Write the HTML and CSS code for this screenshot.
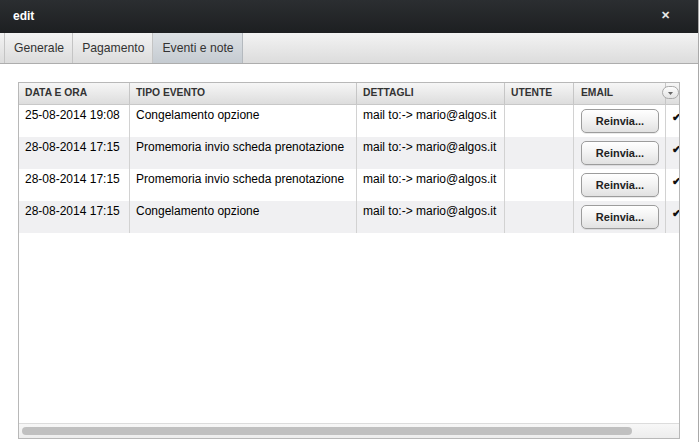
FILE: index.html
```html
<!DOCTYPE html>
<html>
<head>
<meta charset="utf-8">
<link rel="stylesheet" href="styles.css">
</head>
<body>
<div class="window">
  <div class="titlebar">
    <span class="title">edit</span>
    <span class="close">&#x2715;</span>
  </div>
  <div class="tabbar">
    <div class="tab">Generale</div>
    <div class="tab">Pagamento</div>
    <div class="tab active">Eventi e note</div>
  </div>
  <div class="body">
    <div class="grid">
      <div class="viewport">
        <div class="row head">
          <div class="c c1">DATA E ORA</div>
          <div class="c c2">TIPO EVENTO</div>
          <div class="c c3">DETTAGLI</div>
          <div class="c c4">UTENTE</div>
          <div class="c c5">EMAIL</div>
          <div class="c c6"><span class="menu"><svg width="9" height="6" viewBox="0 0 9 6"><path d="M2 2h5l-2.5 3z" fill="#666"/></svg></span></div>
        </div>
        <div class="row">
          <div class="c c1">25-08-2014 19:08</div>
          <div class="c c2">Congelamento opzione</div>
          <div class="c c3">mail to:-&gt; mario@algos.it</div>
          <div class="c c4"></div>
          <div class="c c5"><button class="btn">Reinvia...</button></div>
          <div class="c c6"><span class="chk">&#x2714;</span></div>
        </div>
        <div class="row alt">
          <div class="c c1">28-08-2014 17:15</div>
          <div class="c c2">Promemoria invio scheda prenotazione</div>
          <div class="c c3">mail to:-&gt; mario@algos.it</div>
          <div class="c c4"></div>
          <div class="c c5"><button class="btn">Reinvia...</button></div>
          <div class="c c6"><span class="chk">&#x2714;</span></div>
        </div>
        <div class="row">
          <div class="c c1">28-08-2014 17:15</div>
          <div class="c c2">Promemoria invio scheda prenotazione</div>
          <div class="c c3">mail to:-&gt; mario@algos.it</div>
          <div class="c c4"></div>
          <div class="c c5"><button class="btn">Reinvia...</button></div>
          <div class="c c6"><span class="chk">&#x2714;</span></div>
        </div>
        <div class="row alt">
          <div class="c c1">28-08-2014 17:15</div>
          <div class="c c2">Congelamento opzione</div>
          <div class="c c3">mail to:-&gt; mario@algos.it</div>
          <div class="c c4"></div>
          <div class="c c5"><button class="btn">Reinvia...</button></div>
          <div class="c c6"><span class="chk">&#x2714;</span></div>
        </div>
      </div>
      <div class="hscroll"><div class="thumb"></div></div>
    </div>
  </div>
</div>
</body>
</html>
```
FILE: styles.css
```css
html, body {
  margin: 0;
  padding: 0;
  width: 700px;
  height: 442px;
  overflow: hidden;
  background: #fff;
  font-family: "Liberation Sans", Arial, sans-serif;
}
.window {
  width: 698px;
  height: 442px;
  border-right: 1px solid #a9a9a9;
  display: flex;
  flex-direction: column;
}
.titlebar {
  height: 33px;
  flex: none;
  background: linear-gradient(#2b2e31, #1d1f21);
  display: flex;
  align-items: center;
  justify-content: space-between;
  padding: 0 28px 0 13px;
  color: #fff;
}
.title {
  font-weight: bold;
  font-size: 12px;
  margin-top: -2px;
}
.close {
  font-size: 11px;
  font-weight: bold;
  color: #e8e8e8;
  margin-top: -2px;
}
.tabbar {
  height: 30px;
  flex: none;
  background: linear-gradient(#f3f3f3, #dcdcdc);
  border-bottom: 1px solid #adadad;
  display: flex;
  padding-left: 4px;
}
.tab {
  font-size: 12.2px;
  color: #333;
  padding: 0 8px 0 9px;
  line-height: 30px;
  border-left: 1px solid #c4c4c4;
}
.tab.active {
  background: linear-gradient(#dde1e5, #c5cbd1);
  border-right: 1px solid #b4b9be;
}
.body {
  flex: 1;
  padding: 18px 0 3px 18px;
  display: flex;
}
.grid {
  width: 660px;
  border: 1px solid #b8b8b8;
  display: flex;
  flex-direction: column;
  overflow: hidden;
}
.viewport {
  flex: 1;
  overflow: hidden;
}
.row {
  display: flex;
  height: 32px;
  width: 720px;
  font-size: 12px;
  color: #000;
}
.row.alt {
  background: #f0f0f2;
}
.row.head {
  height: 21px;
  background: linear-gradient(#f6f6f6, #dddddd);
  border-bottom: 1px solid #c8c8c8;
  font-size: 10.3px;
  font-weight: bold;
  color: #333;
}
.c {
  flex: none;
  border-right: 1px solid #d2d2d2;
  padding: 3px 6px 0 6px;
  box-sizing: border-box;
  white-space: nowrap;
  overflow: hidden;
}
.head .c {
  padding-top: 4px;
  border-right-color: #c6c6c6;
}
.c1 { width: 111px; }
.c2 { width: 227px; }
.c3 { width: 148px; }
.c4 { width: 69px; }
.c5 { width: 92px; padding: 4px 0 0 7px; }
.head .c5 { padding: 4px 6px 0 7px; }
.c6 { width: 73px; border-right: none; padding: 5px 0 0 6px; }
.head .c6 { position: relative; overflow: visible; }
.menu {
  position: absolute;
  left: -4px;
  top: 3px;
  width: 15px;
  height: 11px;
  border: 1px solid #a9a9a9;
  border-radius: 7px;
  background: linear-gradient(#fdfdfd, #e3e3e3);
  display: flex;
  align-items: center;
  justify-content: center;
}
.btn {
  width: 78px;
  height: 24px;
  border: 1px solid #9c9c9c;
  border-radius: 5px;
  background: linear-gradient(#ffffff, #f2f2f2 50%, #e1e1e1);
  font-family: "Liberation Sans", Arial, sans-serif;
  font-size: 11px;
  font-weight: bold;
  color: #222;
  padding: 0;
  box-shadow: 0 1px 0 rgba(0,0,0,0.08);
}
.chk {
  font-size: 11px;
  font-weight: bold;
  color: #111;
}
.hscroll {
  height: 14px;
  flex: none;
  background: linear-gradient(#f7f7f7, #ededed);
  border-top: 1px solid #dcdcdc;
  display: flex;
  align-items: center;
  padding-left: 3px;
}
.thumb {
  width: 610px;
  height: 8px;
  border-radius: 4px;
  background: #c0c0c0;
}
```
